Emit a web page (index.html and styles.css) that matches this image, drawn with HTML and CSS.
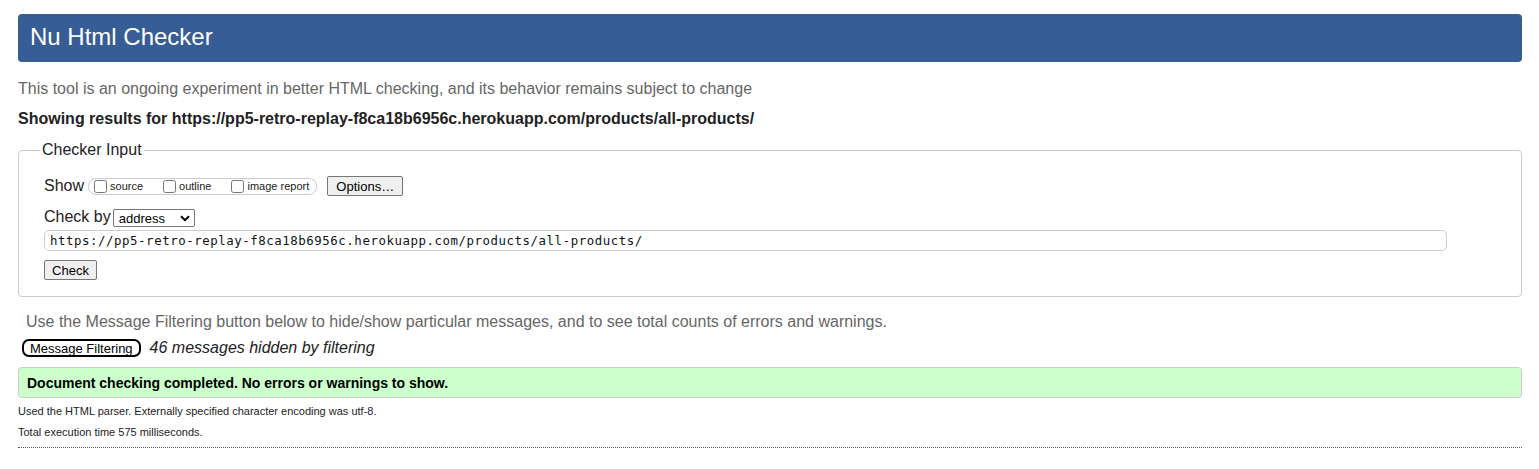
FILE: index.html
```html
<!DOCTYPE html>
<html lang="en">
<head>
<meta charset="utf-8">
<title>Nu Html Checker</title>
<link rel="stylesheet" href="styles.css">
</head>
<body>
<h1 class="title">Nu Html Checker</h1>
<p class="intro">This tool is an ongoing experiment in better HTML checking, and its behavior remains subject to change</p>
<p class="showing">Showing results for https://pp5-retro-replay-f8ca18b6956c.herokuapp.com/products/all-products/</p>
<fieldset class="input-box">
  <legend class="legend">Checker Input</legend>
  <div class="row show-row">
    <span class="lbl">Show</span>
    <span class="opts">
      <label class="opt"><input type="checkbox" class="cb"><span>source</span></label>
      <label class="opt"><input type="checkbox" class="cb"><span>outline</span></label>
      <label class="opt"><input type="checkbox" class="cb"><span>image report</span></label>
    </span>
    <button class="btn options-btn" type="button">Options…</button>
  </div>
  <div class="row by-row">
    <span class="lbl">Check by</span>
    <span class="select"><span>address</span><svg class="chev" width="10" height="7" viewBox="0 0 10 7"><path d="M1 1.2 L5 5.2 L9 1.2" fill="none" stroke="#000" stroke-width="2"/></svg></span>
  </div>
  <div class="url">https://pp5-retro-replay-f8ca18b6956c.herokuapp.com/products/all-products/</div>
  <button class="btn check-btn" type="button">Check</button>
</fieldset>
<p class="filter-help">Use the Message Filtering button below to hide/show particular messages, and to see total counts of errors and warnings.</p>
<div class="filter-row">
  <button class="filter-btn" type="button">Message Filtering</button>
  <em class="hidden-count">46 messages hidden by filtering</em>
</div>
<div class="success">Document checking completed. No errors or warnings to show.</div>
<p class="details">Used the HTML parser. Externally specified character encoding was utf-8.</p>
<p class="details">Total execution time 575 milliseconds.</p>
<hr class="rule">
</body>
</html>
```

FILE: styles.css
```css
html, body {
  background: #fff;
}
body {
  margin: 0;
  padding: 14px 17px 0 18px;
  font-family: "Liberation Sans", Arial, sans-serif;
  color: #222;
}
.title {
  margin: 0;
  height: 48px;
  box-sizing: border-box;
  padding: 9px 12px 0 12px;
  background: #365d95;
  color: #fff;
  font-size: 24px;
  font-weight: normal;
  line-height: 28px;
  border-radius: 4px;
}
.intro {
  margin: 18px 0 0 0;
  font-size: 16px;
  line-height: 18px;
  color: #666;
}
.showing {
  margin: 12px 0 0 0;
  font-size: 16px;
  line-height: 18px;
  font-weight: bold;
  color: #222;
}
.input-box {
  margin: 13px 0 0 0;
  padding: 16px 25px 16px 25px;
  border: 1px solid #ccc;
  border-radius: 4px;
  min-width: 0;
}
.legend {
  padding: 0 2px;
  margin-left: -4px;
  font-size: 16px;
  line-height: 18px;
  color: #222;
}
.row {
  display: flex;
  align-items: center;
}
.lbl {
  font-size: 16px;
  line-height: 18px;
  color: #222;
}
.show-row {
  height: 22px;
}
.opts {
  display: inline-flex;
  align-items: center;
  height: 17px;
  box-sizing: border-box;
  margin-left: 4px;
  padding: 0 7px 0 5px;
  border: 1px solid #ccc;
  border-radius: 8px;
  font-size: 11px;
  color: #222;
}
.opt {
  display: inline-flex;
  align-items: center;
  margin-right: 20px;
}
.opt:last-child {
  margin-right: 0;
}
.cb {
  margin: 0 3px 0 0;
  width: 13px;
  height: 13px;
}
.btn {
  font-family: "Liberation Sans", Arial, sans-serif;
  font-size: 13px;
  line-height: 15px;
  color: #000;
  background: #efefef;
  border: 1px solid #767676;
  border-radius: 2px;
  padding: 1px 6px;
}
.options-btn {
  margin-left: 10px;
  height: 20px;
  width: 76px;
}
.by-row {
  margin-top: 10px;
  height: 20px;
}
.select {
  display: inline-flex;
  align-items: center;
  justify-content: space-between;
  box-sizing: border-box;
  width: 82px;
  height: 18px;
  margin-left: 2px;
  margin-top: 2px;
  padding: 0 4px 0 5px;
  border: 1px solid #767676;
  border-radius: 2px;
  font-size: 13px;
  color: #000;
}
.url {
  margin-top: 3px;
  width: 1403px;
  height: 21px;
  box-sizing: border-box;
  padding: 2px 5px 0 5px;
  border: 1px solid #ccc;
  border-radius: 5px;
  font-family: "DejaVu Sans Mono", monospace;
  font-size: 12.4px;
  line-height: 16px;
  letter-spacing: 0.55px;
  color: #111;
}
.check-btn {
  margin-top: 9px;
  height: 20px;
  width: 53px;
  display: block;
}
.filter-help {
  margin: 16px 0 0 8px;
  font-size: 16px;
  line-height: 18px;
  color: #666;
}
.filter-row {
  display: flex;
  align-items: center;
  margin-top: 8px;
  margin-left: 4px;
}
.filter-btn {
  font-family: "Liberation Sans", Arial, sans-serif;
  font-size: 13px;
  line-height: 13px;
  height: 18px;
  padding: 0 6px;
  background: #fff;
  color: #000;
  border: 2px solid #000;
  border-radius: 7px;
}
.hidden-count {
  margin-left: 9px;
  font-size: 16px;
  line-height: 18px;
  color: #222;
}
.success {
  margin-top: 10px;
  height: 31px;
  box-sizing: border-box;
  padding: 7px 8px 0 8px;
  background: #ccffcc;
  border: 1px solid #ccc;
  border-radius: 4px;
  font-size: 14px;
  line-height: 16px;
  font-weight: bold;
  color: #000;
}
.details {
  margin: 6px 0 0 0;
  font-size: 11px;
  line-height: 14px;
  color: #222;
}
.details + .details {
  margin-top: 7px;
}
.rule {
  margin: 8px 0 0 0;
  border: 0;
  border-top: 1px dotted #555;
  height: 0;
}
```
